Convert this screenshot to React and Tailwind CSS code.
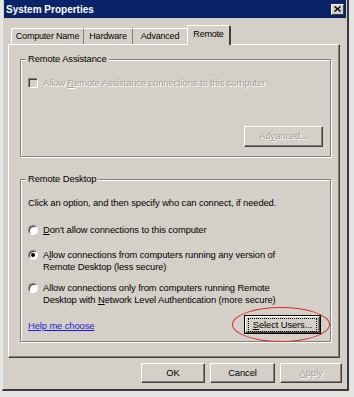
import React from "react";

const F = "font-['Tahoma','Liberation_Sans',Arial,sans-serif]";

function Btn({ children, w, disabled, focus }) {
  const inner = (
    <div
      className={`h-full w-full flex items-center justify-center bg-[#d4d0c8] border border-t-white border-l-white border-r-[#404040] border-b-[#404040] shadow-[inset_-1px_-1px_0_#808080] ${
        disabled ? "text-[#a29e96] [text-shadow:1px_1px_0_#fff]" : "text-black"
      }`}
    >
      {focus ? (
        <div className="border border-dotted border-black px-[4px] leading-[12px]">{children}</div>
      ) : (
        children
      )}
    </div>
  );
  if (focus) {
    return (
      <div className={`${w} h-full border border-black`}>{inner}</div>
    );
  }
  return <div className={`${w} h-full`}>{inner}</div>;
}

function Radio({ checked }) {
  return (
    <div className="mt-[1px] w-[10px] h-[10px] shrink-0 rounded-full bg-white border border-t-[#808080] border-l-[#808080] border-r-white border-b-white shadow-[inset_1px_1px_0_#404040] flex items-center justify-center">
      {checked && <div className="w-[4px] h-[4px] rounded-full bg-black" />}
    </div>
  );
}

function Group({ label, h, children }) {
  return (
    <div
      className={`relative ${h} border border-[#808080] shadow-[1px_1px_0_#fff,inset_1px_1px_0_#fff] flex flex-col`}
    >
      <div className="absolute top-[-7px] left-[5px] px-[2px] bg-[#d4d0c8] leading-[12px]">
        {label}
      </div>
      {children}
    </div>
  );
}

export default function App() {
  return (
    <div
      className={`w-[354px] h-[397px] bg-[#e4e4e2] overflow-hidden ${F} text-[9.4px] tracking-[-0.1px] text-black`}
    >
      <div className="ml-[2px] w-[347px] h-[391px] bg-[#d4d0c8] border-l border-l-[#ecebe6] border-r-2 border-b-2 border-r-[#3a3a3a] border-b-[#3a3a3a] flex flex-col">
        {/* Title bar */}
        <div className="h-[18px] mx-[1px] bg-[#0a246a] flex items-center justify-between pl-[2px] pr-[2px]">
          <span className="text-white font-bold text-[10px] tracking-[0px]">System Properties</span>
          <div className="w-[13px] h-[11px] bg-[#d4d0c8] border border-t-white border-l-white border-r-[#404040] border-b-[#404040] flex items-center justify-center">
            <svg width="7" height="6" viewBox="0 0 7 6">
              <path d="M0.5 0.5 L6.5 5.5 M6.5 0.5 L0.5 5.5" stroke="#000" strokeWidth="1.4" />
            </svg>
          </div>
        </div>

        {/* Tabs */}
        <div className="mt-[7px] ml-[5px] mr-[7px] flex items-end h-[19px] pl-[3px] relative z-10 text-[9px] tracking-[-0.2px]">
          <div className="w-[73px] h-[16px] border-t border-l border-white border-r border-r-[#808080] rounded-t-[2px] flex items-center justify-center">
            Computer Name
          </div>
          <div className="w-[49px] h-[16px] border-t border-white border-r border-r-[#808080] rounded-t-[2px] flex items-center justify-center">
            Hardware
          </div>
          <div className="w-[54px] h-[16px] border-t border-white flex items-center justify-center">
            Advanced
          </div>
          <div className="w-[44px] h-[20px] mb-[-1px] bg-[#d4d0c8] border-t border-l border-white border-r-2 border-r-[#404040] rounded-t-[2px] flex items-start justify-center pt-[2px]">
            Remote
          </div>
        </div>

        {/* Panel */}
        <div className="ml-[5px] mr-[7px] h-[314px] border-l border-t border-white border-r border-b border-r-[#404040] border-b-[#404040] shadow-[inset_-1px_-1px_0_#808080] pl-[11px] pr-[8px] pt-[14px] flex flex-col">
          <Group label="Remote Assistance" h="h-[98px]">
            <div className="pl-[7px] pt-[17px] flex items-start gap-[5px] leading-[12px] text-[#a29e96] [text-shadow:1px_1px_0_#fff]">
              <div className="mt-[1px] w-[10px] h-[10px] border border-t-[#808080] border-l-[#808080] border-r-white border-b-white shadow-[inset_1px_1px_0_#404040]" />
              <span>
                Allow <u>R</u>emote Assistance connections to this computer
              </span>
            </div>
            <div className="mt-auto pb-[9px] pr-[7px] flex justify-end h-[30px]">
              <Btn w="w-[79px]" disabled>
                <span>
                  Ad<u>v</u>anced...
                </span>
              </Btn>
            </div>
          </Group>

          <div className="h-[22px]" />

          <Group label="Remote Desktop" h="h-[163px]">
            <div className="pl-[7px] pt-[17px] pr-[7px] flex flex-col leading-[12px]">
              <div>Click an option, and then specify who can connect, if needed.</div>
              <div className="mt-[15px] flex items-start gap-[5px]">
                <Radio />
                <span>
                  <u>D</u>on't allow connections to this computer
                </span>
              </div>
              <div className="mt-[13px] flex items-start gap-[5px]">
                <Radio checked />
                <span>
                  A<u>l</u>low connections from computers running any version of
                  <br />
                  Remote Desktop (less secure)
                </span>
              </div>
              <div className="mt-[9px] flex items-start gap-[5px]">
                <Radio />
                <span>
                  Allow connections only from computers running Remote
                  <br />
                  Desktop with <u>N</u>etwork Level Authentication (more secure)
                </span>
              </div>
              <div className="mt-[9px] flex items-center justify-between h-[19px] pr-[2px]">
                <span className="text-[#1c1cd8] underline mt-[3px]">Help me choose</span>
                <div className="relative h-full">
                  <Btn w="w-[77px]" focus>
                    <span>
                      <u>S</u>elect Users...
                    </span>
                  </Btn>
                  <div className="absolute left-[-12px] top-[-8px] w-[98px] h-[35px] rounded-[50%] border-[1.5px] border-[#e02a20]" />
                </div>
              </div>
            </div>
          </Group>
        </div>

        {/* Bottom buttons */}
        <div className="mt-[5px] h-[20px] flex justify-end gap-[5px] pr-[5px]">
          <Btn w="w-[64px]">OK</Btn>
          <Btn w="w-[65px]">Cancel</Btn>
          <Btn w="w-[62px]" disabled>
            <span>
              <u>A</u>pply
            </span>
          </Btn>
        </div>
      </div>
    </div>
  );
}
